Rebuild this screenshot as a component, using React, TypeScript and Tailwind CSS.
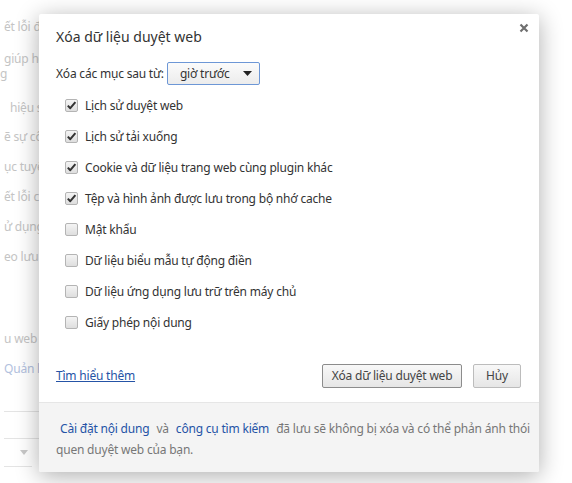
import { type ReactNode } from "react";

const fontStack = { fontFamily: '"Noto Sans", "Open Sans", sans-serif' };

const items = [
  { label: "Lịch sử duyệt web", checked: true },
  { label: "Lịch sử tải xuống", checked: true },
  { label: "Cookie và dữ liệu trang web cùng plugin khác", checked: true },
  { label: "Tệp và hình ảnh được lưu trong bộ nhớ cache", checked: true },
  { label: "Mật khẩu", checked: false },
  { label: "Dữ liệu biểu mẫu tự động điền", checked: false },
  { label: "Dữ liệu ứng dụng lưu trữ trên máy chủ", checked: false },
  { label: "Giấy phép nội dung", checked: false },
];

function Checkbox({ checked }: { checked: boolean }) {
  return (
    <span className="flex h-[13px] w-[13px] shrink-0 items-center justify-center rounded-[2px] border border-[#b4b4b4] bg-gradient-to-b from-[#f4f4f4] to-[#dedede]">
      {checked && (
        <svg width="11" height="11" viewBox="0 0 11 11">
          <path d="M1.8 5.6 L4.3 8.2 L9.4 2.2" fill="none" stroke="#333" strokeWidth="2" strokeLinejoin="round" />
        </svg>
      )}
    </span>
  );
}

function Button({ children, strong, width }: { children: ReactNode; strong?: boolean; width: string }) {
  return (
    <button
      className={
        (strong ? "border-[#8c8c8c] " : "border-[#bcbcbc] ") +
        width +
        " h-[24px] rounded-[2px] border bg-gradient-to-b from-[#f8f8f8] to-[#e6e6e6] text-[12px] tracking-[-0.2px] text-[#444]"
      }
    >
      {children}
    </button>
  );
}

function BackgroundPage() {
  return (
    <div className="flex flex-col pt-[17px] pl-[4px] text-[12px] leading-[20px] tracking-[-0.2px] text-[#c4c4c4]">
      <div className="h-[31px]">ết lỗi đi</div>
      <div className="h-[50px] leading-[15px] pt-[3px]">
        <div>giúp ho</div>
        <div className="-ml-[4px]">g</div>
      </div>
      <div className="h-[29px] pl-[6px]">hiệu su</div>
      <div className="h-[30px]">ẽ sự cố</div>
      <div className="h-[30px]">ục tuyế</div>
      <div className="h-[30px]">ết lỗi ch</div>
      <div className="h-[30px]">ử dụng</div>
      <div className="h-[82px]">eo lưu l</div>
      <div className="h-[30px]">u web b</div>
      <div className="h-[52px] text-[#b2c1de]">Quản lý</div>
      <div className="mr-[420px] flex h-[28px] items-center justify-end border-t border-b border-[#e4e4e4] pr-[22px]">
        <svg width="8" height="5" viewBox="0 0 8 5"><path d="M0 0 L8 0 L4 5 Z" fill="#c8c8c8" /></svg>
      </div>
      <div className="mr-[540px] flex h-[28px] items-center justify-end border-b border-[#e4e4e4] pr-[4px]">
        <svg width="8" height="5" viewBox="0 0 8 5"><path d="M0 0 L8 0 L4 5 Z" fill="#c8c8c8" /></svg>
      </div>
    </div>
  );
}

export default function App() {
  return (
    <div className="relative h-[483px] w-[572px] overflow-hidden bg-white" style={fontStack}>
      <BackgroundPage />
      <div className="absolute top-[14px] left-[39px] flex h-[458px] w-[500px] flex-col rounded-[2px] bg-white text-[#333] shadow-[0_4px_23px_rgba(0,0,0,0.32)]">
        <div className="relative pl-[17px] pt-[13px]">
          <h1 className="text-[14px] leading-[20px] text-[#333]">Xóa dữ liệu duyệt web</h1>
          <svg className="absolute top-[9px] right-[10px]" width="10" height="10" viewBox="0 0 10 10">
            <path d="M1.5 1.5 L8.5 8.5 M8.5 1.5 L1.5 8.5" stroke="#6f6f6f" strokeWidth="2.2" />
          </svg>
        </div>
        <div className="mt-[15px] flex items-center pl-[17px] text-[12px] tracking-[-0.2px]">
          <span>Xóa các mục sau từ:</span>
          <div className="ml-[3px] flex h-[23px] w-[93px] items-center justify-between rounded-[2px] border border-[#6d97d6] bg-gradient-to-b from-[#fbfbfb] to-[#ececec] pl-[12px] pr-[7px]">
            <span>giờ trước</span>
            <svg width="9" height="5" viewBox="0 0 9 5"><path d="M0 0 L9 0 L4.5 5 Z" fill="#222" /></svg>
          </div>
        </div>
        <div className="mt-[5px] flex flex-col pl-[26px] text-[12px] tracking-[-0.2px]">
          {items.map((item) => (
            <label key={item.label} className="flex h-[31px] items-center gap-[7px]">
              <Checkbox checked={item.checked} />
              <span>{item.label}</span>
            </label>
          ))}
        </div>
        <div className="mt-[26px] flex items-center pl-[17px] pr-[18px]">
          <a className="text-[12px] tracking-[-0.2px] text-[#2553a6] underline">Tìm hiểu thêm</a>
          <div className="ml-auto flex gap-[11px]">
            <Button strong width="w-[140px]">Xóa dữ liệu duyệt web</Button>
            <Button width="w-[48px]">Hủy</Button>
          </div>
        </div>
        <div className="mt-auto flex h-[70px] flex-col rounded-b-[2px] border-t border-[#e6e6e6] bg-[#f4f4f4] px-[17px] pt-[15px] text-[12px] leading-[21px] tracking-[-0.2px] text-[#777]">
          <div className="flex whitespace-nowrap">
            <span className="ml-[4px] text-[#2553a6]">Cài đặt nội dung</span>
            <span className="mx-[7px]">và</span>
            <span className="text-[#2553a6]">công cụ tìm kiếm</span>
            <span className="ml-[7px]">đã lưu sẽ không bị xóa và có thể phản ánh thói</span>
          </div>
          <div>quen duyệt web của bạn.</div>
        </div>
      </div>
    </div>
  );
}
